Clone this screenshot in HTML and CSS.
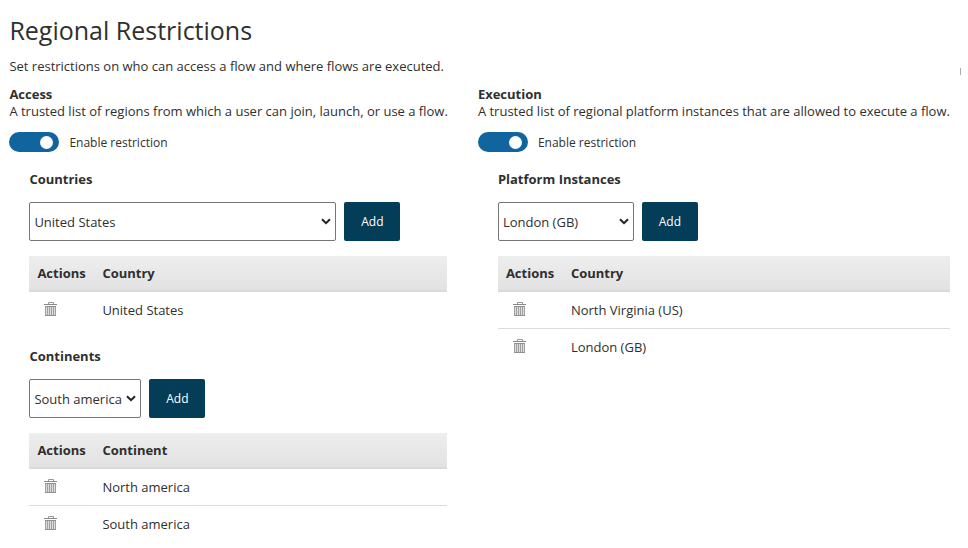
FILE: index.html
```html
<!DOCTYPE html>
<html lang="en">
<head>
<meta charset="utf-8">
<title>Regional Restrictions</title>
<link rel="stylesheet" href="styles.css">
</head>
<body>
<svg class="defs" width="0" height="0">
  <symbol id="trash" viewBox="0 0 13 15">
    <path d="M4.5 2V.5h5V2" fill="none" stroke="#999"/>
    <path d="M0 2.5h13" stroke="#888"/>
    <path d="M1 4h11v10H1z" fill="#ddd"/>
    <path d="M1.500 4v10M3.500 4v10M5.500 4v10M7.500 4v10M9.500 4v10M11.500 4v10" stroke="#a0a0a0"/>
    <path d="M1 4.500h11M1 13.500h11" stroke="#909090"/>
  </symbol>
  <symbol id="chevron" viewBox="0 0 10 7">
    <path d="M1 1.2l4 4 4-4" fill="none" stroke="#222" stroke-width="2"/>
  </symbol>
</svg>
<main class="page">
  <h1 class="title">Regional Restrictions</h1>
  <p class="intro">Set restrictions on who can access a flow and where flows are executed.</p>
  <i class="edge-mark"></i>
  <div class="columns">
    <section>
      <h2 class="heading">Access</h2>
      <p class="description">A trusted list of regions from which a user can join, launch, or use a flow.</p>
      <div class="toggle-row"><span class="toggle"></span><span class="toggle-label">Enable restriction</span></div>
      <div class="panel">
        <h3 class="heading">Countries</h3>
        <div class="picker">
          <div class="select select-country"><select><option>United States</option></select><svg class="chevron"><use href="#chevron"/></svg></div>
          <button class="add">Add</button>
        </div>
        <div class="table">
          <div class="row head"><span>Actions</span><span>Country</span></div>
          <div class="row"><svg class="trash"><use href="#trash"/></svg><span>United States</span></div>
        </div>
      </div>
      <div class="panel">
        <h3 class="heading">Continents</h3>
        <div class="picker">
          <div class="select select-continent"><select><option>South america</option></select><svg class="chevron"><use href="#chevron"/></svg></div>
          <button class="add">Add</button>
        </div>
        <div class="table">
          <div class="row head"><span>Actions</span><span>Continent</span></div>
          <div class="row"><svg class="trash"><use href="#trash"/></svg><span>North america</span></div>
          <div class="row"><svg class="trash"><use href="#trash"/></svg><span>South america</span></div>
        </div>
      </div>
    </section>
    <section>
      <h2 class="heading">Execution</h2>
      <p class="description">A trusted list of regional platform instances that are allowed to execute a flow.</p>
      <div class="toggle-row"><span class="toggle"></span><span class="toggle-label">Enable restriction</span></div>
      <div class="panel">
        <h3 class="heading">Platform Instances</h3>
        <div class="picker">
          <div class="select select-instance"><select><option>London (GB)</option></select><svg class="chevron"><use href="#chevron"/></svg></div>
          <button class="add">Add</button>
        </div>
        <div class="table">
          <div class="row head"><span>Actions</span><span>Country</span></div>
          <div class="row"><svg class="trash"><use href="#trash"/></svg><span>North Virginia (US)</span></div>
          <div class="row"><svg class="trash"><use href="#trash"/></svg><span>London (GB)</span></div>
        </div>
      </div>
    </section>
  </div>
</main>
</body>
</html>
```
FILE: styles.css
```css
* { box-sizing: border-box; }
body {
  margin: 0;
  height: 548px;
  overflow: hidden;
  background: #fff;
  color: #2f2f2f;
  font: 13px/18px "Open Sans", sans-serif;
}
.defs { position: absolute; }
h1, h2, h3, p { margin: 0; }
.page { padding: 12px 0 0 9.4px; }
.title { font-size: 25px; line-height: 36px; font-weight: 400; }
.intro { margin-top: 9px; }
.edge-mark {
  position: absolute;
  left: 960px;
  top: 68px;
  width: 1px;
  height: 7px;
  background: #aaa;
}
.columns {
  display: grid;
  grid-template-columns: 438px 472px;
  column-gap: 30.500px;
  margin-top: 10px;
}
.heading { font-size: 13px; line-height: 18px; font-weight: 700; }
.description { line-height: 17px; white-space: nowrap; }
.toggle-row { display: flex; align-items: center; height: 20px; margin-top: 12px; }
.toggle {
  display: flex;
  align-items: center;
  justify-content: flex-end;
  width: 50px;
  height: 20px;
  padding-right: 6px;
  border-radius: 10px;
  background: #11659e;
}
.toggle::after {
  content: "";
  width: 13px;
  height: 13px;
  border-radius: 50%;
  background: #fff;
}
.toggle-label { margin-left: 10px; font-size: 12px; padding-top: 1px; }
.panel { margin: 18px 0 0 20px; }
.picker { display: flex; gap: 8px; margin-top: 14px; }
.select { position: relative; height: 39px; }
.select-country { width: 307px; }
.select-continent { width: 112px; }
.select-instance { width: 136px; }
.select select {
  appearance: none;
  width: 100%;
  height: 39px;
  padding: 0 0 0 4px;
  border: 1px solid #767676;
  border-radius: 2px;
  background: #fff;
  color: #2f2f2f;
  font: inherit;
}
.chevron {
  position: absolute;
  right: 5px;
  top: 16px;
  width: 10px;
  height: 7px;
  pointer-events: none;
}
.add {
  width: 56px;
  height: 39px;
  padding: 0;
  border: 0;
  border-radius: 2px;
  background: #033d58;
  color: #fff;
  font: 500 12px "Open Sans", sans-serif;
}
.table { margin-top: 15px; }
.row {
  display: grid;
  grid-template-columns: 65px 1fr;
  align-items: center;
  height: 37px;
  padding-left: 8px;
  border-bottom: 1px solid #ddd;
}
.row:last-child { border-bottom-color: transparent; }
.row.head {
  height: 36px;
  border-bottom: 2px solid #dadada;
  background: linear-gradient(#eee, #e2e2e2);
  font-weight: 700;
}
.trash { width: 13px; height: 15px; margin: 0 0 2px 7px; }
```
